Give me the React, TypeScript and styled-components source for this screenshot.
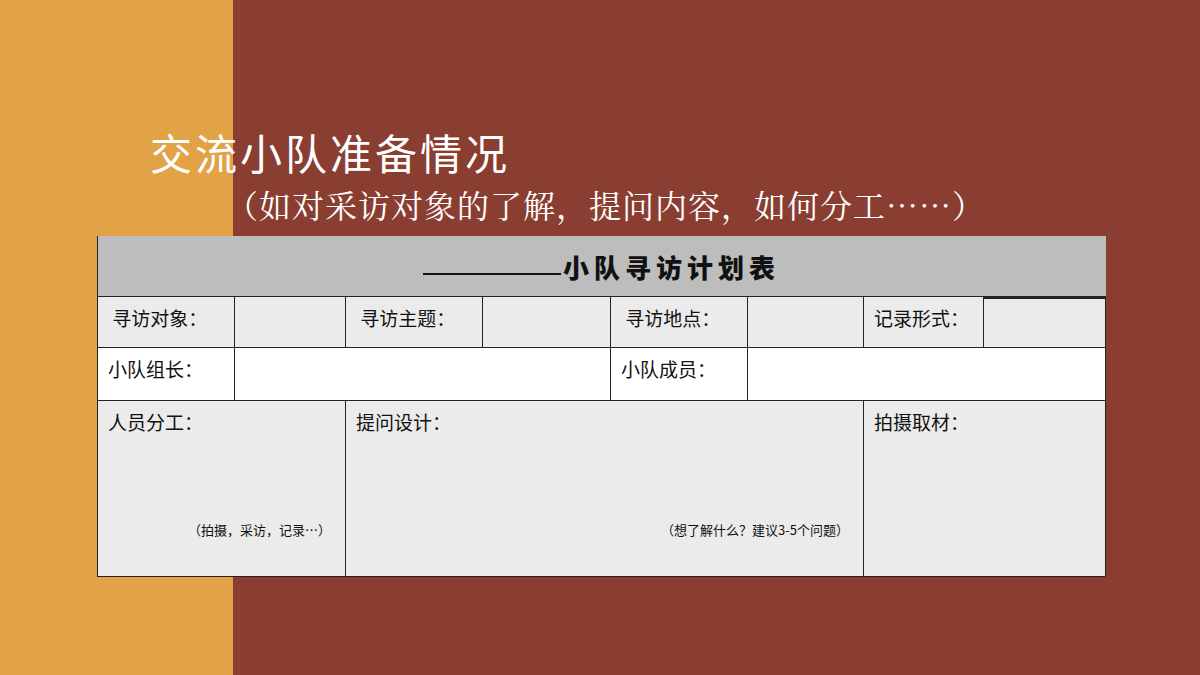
import styled, {createGlobalStyle} from 'styled-components';

const Global = createGlobalStyle`
  html, body { margin: 0; padding: 0; }
  body { font-family: "Noto Sans CJK SC", sans-serif; }
`;

const Slide = styled.div`
  width: 1200px;
  height: 675px;
  background: linear-gradient(to right, #e2a246 0, #e2a246 233px, #8a3d31 233px);
  display: flex;
  flex-direction: column;
  overflow: hidden;
`;

const Title = styled.h1`
  margin: 124px 0 0 150px;
  font-size: 42px;
  font-weight: 400;
  color: #fff;
  line-height: 56px;
  letter-spacing: 3px;
`;

const Subtitle = styled.div`
  margin: 2px 0 0 226px;
  font-family: "Noto Serif CJK SC", "Noto Sans CJK SC", serif;
  font-size: 32px;
  color: #fff;
  line-height: 44px;
  letter-spacing: 1px;
`;

const Table = styled.div`
  margin: 10px 0 0 97px;
  width: 1008px;
  display: grid;
  grid-template-columns: 137px 111px 137px 128px 137px 116px 120px 122px;
  grid-template-rows: 60px 51px 53px 176px;
  border-left: 1px solid #222;
  border-bottom: 1px solid #222;
  box-sizing: border-box;
`;

const Header = styled.div`
  grid-column: 1 / -1;
  background: #bdbdbd;
  display: flex;
  align-items: center;
  justify-content: center;
  border-right: 1px solid #bdbdbd;
`;

const Blank = styled.span`
  display: inline-block;
  width: 138px;
  border-bottom: 2px solid #111;
  height: 16px;
  margin-right: 2px;
`;

const HeaderText = styled.span`
  font-size: 26px;
  font-weight: 900;
  color: #111;
  letter-spacing: 5px;
`;

const Cell = styled.div<{$span?: number; $bg?: string; $thick?: boolean}>`
  grid-column: span ${p => p.$span ?? 1};
  background: ${p => p.$bg ?? '#ebebeb'};
  border-top: ${p => (p.$thick ? 3 : 1)}px solid #222;
  border-right: 1px solid #222;
  box-sizing: border-box;
  padding: 8px 10px;
  font-size: 19px;
  color: #111;
  line-height: 26px;
  position: relative;
`;

const Hint = styled.span`
  position: absolute;
  right: 14px;
  bottom: 38px;
  font-size: 13px;
  line-height: 16px;
`;

export default function App() {
  return (
    <Slide>
      <Global/>
      <Title>交流小队准备情况</Title>
      <Subtitle>（如对采访对象的了解，提问内容，如何分工……）</Subtitle>
      <Table>
        <Header><Blank/><HeaderText>小队寻访计划表</HeaderText></Header>
        <Cell>&nbsp;寻访对象：</Cell>
        <Cell/>
        <Cell>&nbsp;寻访主题：</Cell>
        <Cell/>
        <Cell>&nbsp;寻访地点：</Cell>
        <Cell/>
        <Cell>记录形式：</Cell>
        <Cell $thick/>
        <Cell $bg="#fff">小队组长：</Cell>
        <Cell $bg="#fff" $span={3}/>
        <Cell $bg="#fff">小队成员：</Cell>
        <Cell $bg="#fff" $span={3}/>
        <Cell $span={2}>人员分工：<Hint>（拍摄，采访，记录…）</Hint></Cell>
        <Cell $span={4}>提问设计：<Hint>（想了解什么？建议3-5个问题）</Hint></Cell>
        <Cell $span={2}>拍摄取材：</Cell>
      </Table>
    </Slide>
  );
}
